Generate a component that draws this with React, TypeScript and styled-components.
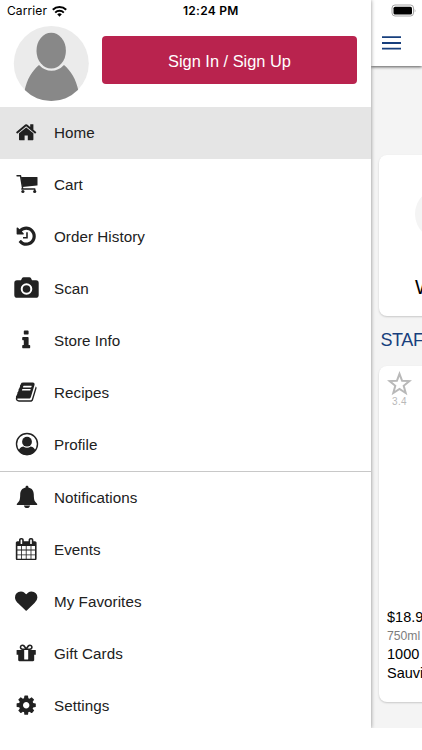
import React from "react";
import styled, { createGlobalStyle } from "styled-components";

const Global = createGlobalStyle`
  * { box-sizing: border-box; }
  html, body { margin: 0; background: #fff; overflow: hidden; }
  body { font-family: "Liberation Sans", Arial, sans-serif; color: #212121; }
  svg { display: block; flex: none; }
`;

const Screen = styled.div`
  display: flex;
  width: 422px;
  height: 750px;
  overflow: hidden;
  background: #fff;
`;

const Drawer = styled.aside`
  position: relative;
  z-index: 1;
  flex: 0 0 370.5px;
  height: 728px;
  background: #fff;
  box-shadow: 0 0 4px rgba(0, 0, 0, 0.45);
  clip-path: inset(0 -8px 0 0);
`;

const StatusBar = styled.header`
  display: grid;
  grid-template-columns: 183px 1fr;
  height: 22px;
  color: #000;
`;

const Carrier = styled.div`
  display: flex;
  align-items: center;
  gap: 5px;
  padding-left: 7px;
  font: 12px/22px Inter, sans-serif;
  letter-spacing: 0.1px;
`;

const Clock = styled.time`
  font: 600 12px/22px Inter, sans-serif;
  letter-spacing: 0.25px;
`;

const Account = styled.div`
  display: flex;
  height: 84.5px;
  padding: 3px 0 0 13px;
  gap: 12px;
`;

const SignIn = styled.button`
  width: 255px;
  height: 48px;
  margin: 11px 0 0;
  padding: 2px 0 0 0;
  border: 0;
  border-radius: 4px;
  background: #b9234e;
  color: #fff;
  font: 16.4px "Liberation Sans", Arial, sans-serif;
`;

const Group = styled.nav<{ $divided?: boolean }>`
  border-top: ${(p) => (p.$divided ? "1px solid #c8c8c8" : "0")};
`;

const Row = styled.a<{ $active?: boolean }>`
  display: grid;
  grid-template-columns: 26px 1fr;
  align-items: center;
  column-gap: 14.5px;
  height: 52px;
  padding: 0 0 1px 13.5px;
  background: ${(p) => (p.$active ? "#e5e5e5" : "transparent")};
  font-size: 15.2px;
  letter-spacing: 0.05px;
  color: #212121;
`;

const IconBox = styled.span`
  display: flex;
  justify-content: center;
`;

const Page = styled.main`
  flex: 0 0 51.5px;
  height: 728px;
  overflow: hidden;
  background: #f4f4f4;
`;

const TopBar = styled.header`
  height: 65.5px;
  padding: 4px 0 0 11.5px;
  background: #fff;
  box-shadow: 0 1px 3px rgba(0, 0, 0, 0.65);
`;

const BatteryBox = styled.div`
  padding-left: 9px;
  height: 32px;
`;

const Card = styled.section<{ $height: number }>`
  width: 240px;
  height: ${(p) => p.$height}px;
  margin-left: 8.5px;
  border-radius: 8px;
  background: #fff;
  box-shadow: 0 1px 2px rgba(0, 0, 0, 0.18);
`;

const Welcome = styled(Card)`
  margin-top: 89.5px;
  padding: 33px 0 0 36px;
`;

const Disc = styled.div`
  width: 52px;
  height: 52px;
  border-radius: 50%;
  background: #f4f4f4;
`;

const WelcomeText = styled.p`
  margin: 35px 0 0;
  font-size: 20px;
  line-height: 24px;
  color: #000;
`;

const Heading = styled.h2`
  height: 50px;
  margin: 0;
  padding: 0 0 0 10px;
  font-size: 18px;
  line-height: 49px;
  font-weight: 400;
  letter-spacing: -0.4px;
  color: #173f7d;
  white-space: nowrap;
`;

const Product = styled(Card)`
  display: flex;
  flex-direction: column;
  padding: 5px 0 19px 8px;
`;

const Rating = styled.div`
  width: 25px;
  text-align: center;
  font-size: 10px;
  line-height: 12px;
  letter-spacing: 0.3px;
  color: #b9b9b9;
`;

const Details = styled.div`
  margin-top: auto;
  font-size: 14.5px;
  line-height: 19px;
  color: #000;
  white-space: nowrap;
`;

const Size = styled.div`
  font-size: 12.2px;
  line-height: 18px;
  color: #7d7d7d;
`;

type IconName =
  | "home" | "cart" | "history" | "camera" | "info" | "book"
  | "profile" | "bell" | "calendar" | "heart" | "gift" | "gear";

const glyphs: Record<IconName, { box: string; w: number; h: number; art: React.ReactNode }> = {
  home: {
    box: "0 0 1792 1792", w: 22.4, h: 22.4,
    art: <path d="M1472 992v480q0 26-19 45t-45 19h-384v-384h-256v384h-384q-26 0-45-19t-19-45v-480q0-1 .5-3t.5-3l575-474 575 474q1 2 1 6zm223-69l-62 74q-8 9-21 11h-3q-13 0-21-7l-692-577-692 577q-12 8-24 7-13-2-21-11l-62-74q-8-10-7-23.5t11-21.5l719-599q32-26 76-26t76 26l244 204v-195q0-14 9-23t23-9h192q14 0 23 9t9 23v408l219 182q10 8 11 21.5t-7 23.5z" />,
  },
  cart: {
    box: "0 0 22 20", w: 22, h: 20,
    art: (
      <>
        <path d="M1 1.700h3.500l2.200 13.100M5.800 15h13v2.400" fill="none" stroke="currentColor" strokeWidth="1.400" strokeLinejoin="round" strokeLinecap="round" />
        <path d="M5 2.900h15.900c.4 0 .6.200.6.600v7.400c0 .4-.2.600-.6.700L6.500 13.100z" />
        <circle cx="6.900" cy="17.500" r="1.600" /><circle cx="18.700" cy="17.500" r="1.600" />
      </>
    ),
  },
  history: {
    box: "0 0 1792 1792", w: 22.4, h: 22.4,
    art: <path d="M1664 896q0 156-61 298t-164 245-245 164-298 61q-172 0-327-72.5t-264-204.5q-7-10-6.5-22.5t8.5-20.5l137-138q10-9 25-9 16 2 23 12 73 95 179 147t225 52q104 0 198.5-40.5t163.5-109.5 109.5-163.5 40.5-198.5-40.5-198.5-109.5-163.5-163.5-109.5-198.5-40.5q-98 0-188 35.5t-160 101.5l137 138q31 30 14 69-17 40-59 40h-448q-26 0-45-19t-19-45v-448q0-42 40-59 39-17 69 14l130 129q107-101 244.5-156.5t284.5-55.5q156 0 298 61t245 164 164 245 61 298zm-640-288v448q0 14-9 23t-23 9h-320q-14 0-23-9t-9-23v-64q0-14 9-23t23-9h224v-352q0-14 9-23t23-9h64q14 0 23 9t9 23z" />,
  },
  camera: {
    box: "0 0 25 24", w: 25, h: 24,
    art: (
      <>
        <path d="M3 4.200h4L8.100 2Q8.600 1.200 9.600 1.200h5.800q1 0 1.500.8L18 4.200h4q2.700 0 2.700 2.700v12q0 2.800-2.700 2.800H3Q.3 21.700.3 18.900v-12Q.3 4.200 3 4.200z" />
        <circle cx="12.500" cy="13" r="4.800" fill="none" stroke="#fff" strokeWidth="2" />
      </>
    ),
  },
  info: {
    box: "0 0 1792 1792", w: 22.4, h: 22.4,
    art: <path d="M1216 1344v128q0 26-19 45t-45 19h-512q-26 0-45-19t-19-45v-128q0-26 19-45t45-19h64v-384h-64q-26 0-45-19t-19-45v-128q0-26 19-45t45-19h384q26 0 45 19t19 45v576h64q26 0 45 19t19 45zm-128-1152v192q0 26-19 45t-45 19h-256q-26 0-45-19t-19-45v-192q0-26 19-45t45-19h256q26 0 45 19t19 45z" />,
  },
  book: {
    box: "0 0 1792 1792", w: 22.4, h: 22.4,
    art: <path d="M1703 478q40 57 18 129l-275 906q-19 64-76.5 107.5t-122.5 43.5h-923q-77 0-148.5-53.5t-99.5-131.5q-24-67-2-127 0-4 3-27t4-37q1-8-3-21.5t-3-19.5q2-11 8-21t16.5-23.5 16.5-23.5q23-38 45-91.5t30-91.5q3-10 .5-30t-.5-28q3-11 17-28t17-23q21-36 42-92t25-90q1-9-2.5-32t.5-28q4-13 22-30.5t22-22.5q19-26 42.5-84.5t27.5-96.5q1-8-3-25.5t-2-26.5q2-8 9-18t18-23 17-21q8-12 16.5-30.5t15-35 16-36 19.5-32 26.5-23.5 36-11.5 47.5 5.5l-1 3q38-9 51-9h761q74 0 114 56t18 130l-274 906q-36 119-71.5 153.5t-128.5 34.5h-869q-27 0-38 15-11 16-1 43 24 70 144 70h923q29 0 56-15.5t35-41.5l300-987q7-22 5-57 38 15 59 43zm-1064 2q-4 13 2 22.5t20 9.5h608q13 0 25.5-9.5t16.5-22.5l21-64q4-13-2-22.5t-20-9.5h-608q-13 0-25.5 9.5t-16.5 22.5zm-83 256q-4 13 2 22.5t20 9.5h608q13 0 25.5-9.5t16.5-22.5l21-64q4-13-2-22.5t-20-9.5h-608q-13 0-25.5 9.5t-16.5 22.5z" />,
  },
  profile: {
    box: "0 0 24 24", w: 24, h: 24,
    art: (
      <>
        <circle cx="12" cy="12" r="10.500" fill="none" stroke="currentColor" strokeWidth="1.400" />
        <circle cx="12" cy="9.700" r="4.900" />
        <path d="M3.600 18.800q.8-3.700 4.700-4.400 3.700 2.500 7.400 0 3.900.7 4.700 4.400-3.300 4.400-8.400 4.400t-8.400-4.400z" />
      </>
    ),
  },
  bell: {
    box: "0 0 22 24", w: 22, h: 24,
    art: (
      <>
        <path d="M11 .7c.8 0 1.400.5 1.400 1.400v.4c3.800.8 5.300 3.400 5.400 7.100.1 5.300.6 6.800 3 8.800.8.700.6 1.700-.4 1.700H1.600c-1 0-1.200-1-.4-1.700 2.400-2 2.900-3.500 3-8.800.1-3.700 1.600-6.300 5.400-7.100v-.4C9.600 1.200 10.200.7 11 .7z" />
        <path d="M7.900 20.500h6.200c-.3 1.600-1.500 2.600-3.100 2.600s-2.800-1-3.100-2.600z" />
      </>
    ),
  },
  calendar: {
    box: "0 0 1792 1792", w: 22.4, h: 22.4,
    art: <path d="M192 1664h288v-288h-288v288zm352 0h320v-288h-320v288zm-352-352h288v-320h-288v320zm352 0h320v-320h-320v320zm-352-384h288v-288h-288v288zm736 736h320v-288h-320v288zm-384-736h320v-288h-320v288zm768 736h288v-288h-288v288zm-384-352h320v-320h-320v320zm-352-864v-288q0-13-9.500-22.500t-22.500-9.500h-64q-13 0-22.500 9.500t-9.500 22.500v288q0 13 9.500 22.500t22.500 9.500h64q13 0 22.500-9.500t9.500-22.500zm736 864h288v-320h-288v320zm-384-384h320v-288h-320v288zm384 0h288v-288h-288v288zm32-480v-288q0-13-9.500-22.500t-22.500-9.500h-64q-13 0-22.500 9.500t-9.500 22.500v288q0 13 9.500 22.500t22.500 9.500h64q13 0 22.500-9.500t9.500-22.500zm384-64v1280q0 52-38 90t-90 38h-1408q-52 0-90-38t-38-90v-1280q0-52 38-90t90-38h128v-96q0-66 47-113t113-47h64q66 0 113 47t47 113v96h384v-96q0-66 47-113t113-47h64q66 0 113 47t47 113v96h128q52 0 90 38t38 90z" />,
  },
  heart: {
    box: "0 0 1792 1792", w: 22.4, h: 22.4,
    art: <path d="M896 1664q-26 0-44-18l-624-602q-10-8-27.500-26t-55.500-65.500-68-97.500-53.500-121-23.500-138q0-220 127-344t351-124q62 0 126.500 21.500t120 58 95.500 68.500 76 68q36-36 76-68t95.500-68.500 120-58 126.500-21.500q224 0 351 124t127 344q0 221-229 450l-623 600q-18 18-44 18z" />,
  },
  gift: {
    box: "0 0 1792 1792", w: 22.4, h: 22.4,
    art: <path d="M1056 1356v-716h-320v716q0 25 18 38.500t46 13.500h192q28 0 46-13.500t18-38.500zm-456-844h195l-126-161q-26-31-69-31-40 0-68 28t-28 68 28 68 68 28zm688-96q0-40-28-68t-68-28q-43 0-69 31l-125 161h194q40 0 68-28t28-68zm376 256v320q0 14-9 23t-23 9h-96v416q0 40-28 68t-68 28h-1088q-40 0-68-28t-28-68v-416h-96q-14 0-23-9t-9-23v-320q0-14 9-23t23-9h440q-93 0-158.500-65.500t-65.500-158.500 65.500-158.500 158.500-65.500q107 0 168 77l128 165 128-165q61-77 168-77 93 0 158.500 65.500t65.500 158.500-65.500 158.500-158.500 65.500h440q14 0 23 9t9 23z" />,
  },
  gear: {
    box: "0 0 1792 1792", w: 22.4, h: 22.4,
    art: <path d="M1152 896q0-106-75-181t-181-75-181 75-75 181 75 181 181 75 181-75 75-181zm512-109v222q0 12-8 23t-20 13l-185 28q-19 54-39 91 35 50 107 138 10 12 10 25t-9 23q-27 37-99 108t-94 71q-12 0-26-9l-138-108q-44 23-91 38-16 136-29 186-7 28-36 28h-222q-14 0-24.500-8.500t-11.500-21.500l-28-184q-49-16-90-37l-141 107q-10 9-25 9-14 0-25-11-126-114-165-168-7-10-7-23 0-12 8-23 15-21 51-66.500t54-70.500q-27-50-41-99l-183-27q-13-2-21-12.500t-8-23.500v-222q0-12 8-23t19-13l186-28q14-46 39-92-40-57-107-138-10-12-10-24 0-10 9-23 26-36 98.500-107.500t94.500-71.500q13 0 26 10l138 107q44-23 91-38 16-136 29-186 7-28 36-28h222q14 0 24.500 8.500t11.500 21.500l28 184q49 16 90 37l142-107q9-9 24-9 13 0 25 10 129 119 165 170 7 8 7 22 0 12-8 23-15 21-51 66.500t-54 70.500q26 50 41 98l183 28q13 2 21 12.500t8 23.500z" />,
  },
};

function MenuIcon({ name }: { name: IconName }) {
  const g = glyphs[name];
  return (
    <IconBox>
      <svg width={g.w} height={g.h} viewBox={g.box} fill="currentColor">{g.art}</svg>
    </IconBox>
  );
}

const primary: [IconName, string][] = [
  ["home", "Home"], ["cart", "Cart"], ["history", "Order History"], ["camera", "Scan"],
  ["info", "Store Info"], ["book", "Recipes"], ["profile", "Profile"],
];
const secondary: [IconName, string][] = [
  ["bell", "Notifications"], ["calendar", "Events"], ["heart", "My Favorites"],
  ["gift", "Gift Cards"], ["gear", "Settings"],
];

const Wifi = () => (
  <svg width="15" height="11" viewBox="0 0 15 11" fill="none" stroke="#000" strokeWidth="2">
    <path d="M.8 3.800a9.600 9.600 0 0 1 13.400 0M3.200 6.600a6.200 6.200 0 0 1 8.600 0" />
    <path d="M5.200 8.300a3.300 3.300 0 0 1 4.600 0L7.500 10.700z" fill="#000" stroke="none" />
  </svg>
);

const Avatar = () => (
  <svg width="77" height="77" viewBox="0 0 77 77">
    <defs>
      <clipPath id="avatar-disc"><circle cx="38.300" cy="38.500" r="37.500" /></clipPath>
    </defs>
    <circle cx="38.300" cy="38.500" r="37.500" fill="#ebebeb" />
    <g clipPath="url(#avatar-disc)" fill="#888">
      <path d="M26 40C19 46 14 54 11.500 66v11h54V66C63 54 58 46 51 40q-5.500 5.800-12.500 5.800T26 40z" />
      <ellipse cx="38.200" cy="25.700" rx="14.700" ry="17.900" />
    </g>
  </svg>
);

export default function App() {
  return (
    <>
      <Global />
      <Screen>
        <Drawer>
          <StatusBar>
            <Carrier>Carrier <Wifi /></Carrier>
            <Clock>12:24 PM</Clock>
          </StatusBar>
          <Account>
            <Avatar />
            <SignIn>Sign In / Sign Up</SignIn>
          </Account>
          <Group>
            {primary.map(([icon, label]) => (
              <Row key={label} $active={icon === "home"}><MenuIcon name={icon} />{label}</Row>
            ))}
          </Group>
          <Group $divided>
            {secondary.map(([icon, label]) => (
              <Row key={label}><MenuIcon name={icon} />{label}</Row>
            ))}
          </Group>
        </Drawer>
        <Page>
          <TopBar>
            <BatteryBox>
              <svg width="26" height="13" viewBox="0 0 26 13">
                <rect x="1" y="1" width="21.500" height="11" rx="3" fill="none" stroke="#a5a5a5" />
                <rect x="2.500" y="2.700" width="18.500" height="7.800" rx="1.600" />
                <path d="M23.700 4.600q1.400 2 0 4z" fill="#a5a5a5" />
              </svg>
            </BatteryBox>
            <svg width="19" height="15" viewBox="0 0 19 15" stroke="#173f7d" strokeWidth="1.800">
              <path d="M0 1.200h19M0 7h19M0 12.700h19" />
            </svg>
          </TopBar>
          <Welcome $height={161}>
            <Disc />
            <WelcomeText>Welcome</WelcomeText>
          </Welcome>
          <Heading>STAFF PICKS</Heading>
          <Product $height={336}>
            <svg width="25" height="25" viewBox="0 0 25 25" fill="none" stroke="#b9b9b9" strokeWidth="2">
              <path d="M12.500 2.800l2.600 7 7.400.3-5.800 4.700 2 7.200-6.200-4.100-6.200 4.100 2-7.200-5.800-4.700 7.400-.3z" />
            </svg>
            <Rating>3.4</Rating>
            <Details>
              <div>$18.99</div>
              <Size>750ml</Size>
              <div>1000 Stories</div>
              <div>Sauvignon Blanc</div>
            </Details>
          </Product>
        </Page>
      </Screen>
    </>
  );
}
